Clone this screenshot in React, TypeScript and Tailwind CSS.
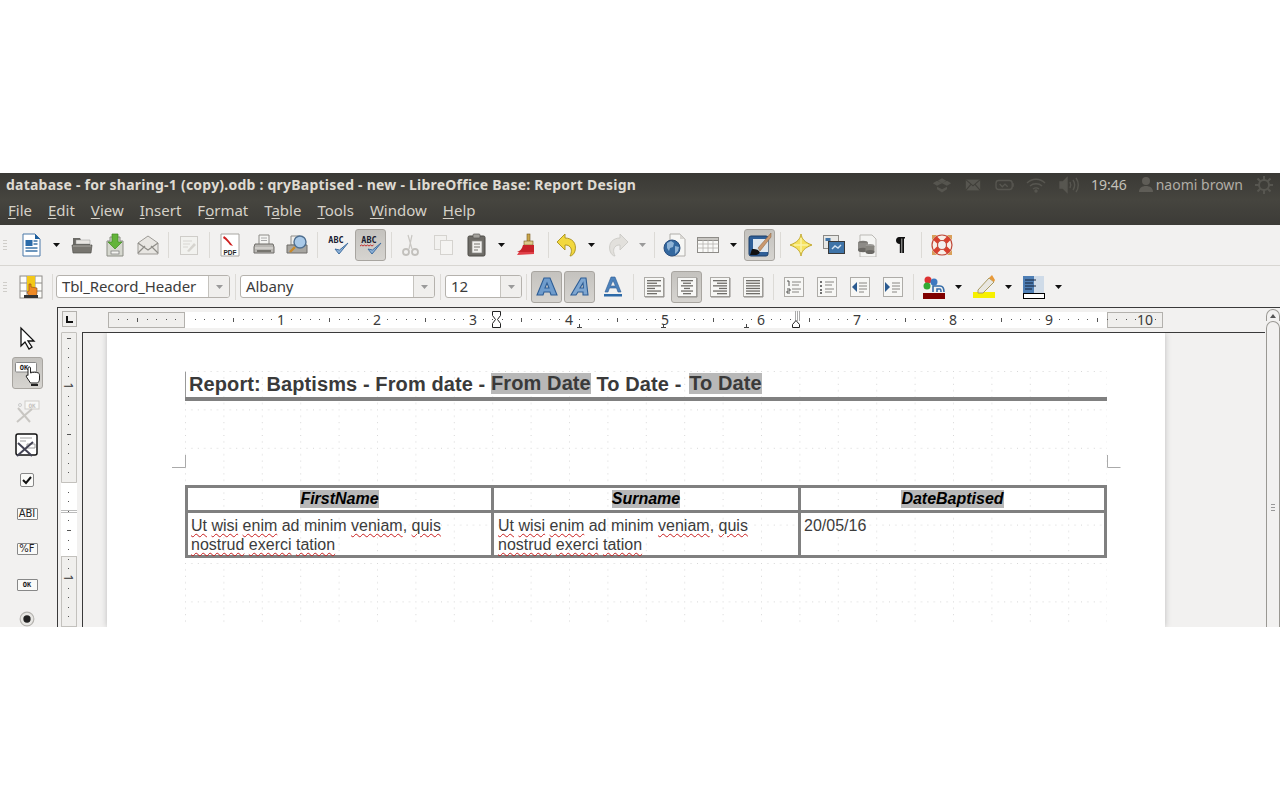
import React from "react";

const uiFont = "font-['Noto_Sans','Open_Sans',sans-serif]";
const docFont = "font-['Liberation_Sans',Arial,sans-serif]";

function Ic({ children, s = 24 }: { children: React.ReactNode; s?: number }) {
  return (
    <svg width={s} height={s} viewBox="0 0 24 24" fill="none">
      {children}
    </svg>
  );
}

function Slot({ w, active, children }: { w: string; active?: boolean; children?: React.ReactNode }) {
  return (
    <div className={`${w} h-full flex items-center justify-center shrink-0`}>
      {active ? (
        <div className="w-[31px] h-[32px] flex items-center justify-center rounded-[3px] border border-[#a8a5a0] bg-gradient-to-b from-[#c4c2be] to-[#d6d4d0]">
          {children}
        </div>
      ) : (
        children
      )}
    </div>
  );
}

function Drop({ dim }: { dim?: boolean }) {
  return (
    <svg width="7" height="4" viewBox="0 0 7 4">
      <path d="M0 0h7L3.500 4z" fill={dim ? "#9a9a9a" : "#111"} />
    </svg>
  );
}

function Sep() {
  return <div className="w-[8px] h-full flex items-center justify-center shrink-0"><div className="w-px h-[26px] bg-[#dcdad6]" /></div>;
}

function Grip() {
  return (
    <div className="w-[14px] h-full flex items-center justify-start pl-[3px] shrink-0">
      <div className="flex flex-col gap-[2px]">
        <div className="w-[4px] h-px bg-[#cfcdc9]" />
        <div className="w-[4px] h-px bg-[#cfcdc9]" />
        <div className="w-[4px] h-px bg-[#cfcdc9]" />
        <div className="w-[4px] h-px bg-[#cfcdc9]" />
      </div>
    </div>
  );
}

const NewDoc = () => (
  <Ic>
    <path d="M4 1h12l5 5v17H4z" fill="#fff" stroke="#4a78a8" />
    <path d="M16 1l5 5h-5z" fill="#1d5f9e" />
    <rect x="6.500" y="7" width="7" height="6" fill="#2a6aa8" />
    <path d="M14.500 8h4M14.500 11h4M6.500 15h12M6.500 18h12" stroke="#3d74a8" strokeWidth="1.300" />
  </Ic>
);
const Open = () => (
  <Ic>
    <path d="M3 5h7l1 2h9v6H3z" fill="#6b6a66" />
    <path d="M6 7h14v4H6z" fill="#e8e6e2" stroke="#999" strokeWidth=".5" />
    <path d="M2 12h20l-1 8H3z" fill="#77756f" stroke="#55534f" strokeWidth=".7" />
    <path d="M3 13h18" stroke="#aaa8a3" />
  </Ic>
);
const Save = () => (
  <Ic>
    <path d="M4 8h3v-4h10v4h3v15H4z" fill="#d6d8cf" stroke="#8b8d84" />
    <path d="M9 1h6v8h4l-7 7-7-7h4z" fill="#63b43a" stroke="#3f8a22" strokeWidth=".7" />
    <rect x="8" y="18" width="8" height="3" fill="#f4f4f0" stroke="#777" strokeWidth=".7" />
  </Ic>
);
const Mail = () => (
  <Ic>
    <path d="M2 10l10-7 10 7v11H2z" fill="#e8e6e2" stroke="#9d9b96" />
    <path d="M2 20l7-7M22 20l-7-7M2 10l10 7 10-7" stroke="#8f8d88" strokeWidth="1.200" />
  </Ic>
);
const Edit = () => (
  <Ic>
    <rect x="3.500" y="3.500" width="17" height="18" fill="#f2f2ef" stroke="#cfcdc9" />
    <path d="M6 8h9M6 11h7M6 14h5" stroke="#d8d6d2" />
    <path d="M10 18l7-8 2 2-7 7z" fill="#d6d4cf" />
  </Ic>
);
const Pdf = () => (
  <Ic>
    <path d="M3 1h18v22H3z" fill="#fff" stroke="#a8a6a2" />
    <path d="M6 3c3 2 6 6 9 10l-3-1c-2-3-4-5-7-7z" fill="#cf2020" />
    <text x="12" y="21.500" textAnchor="middle" fontSize="6.500" fontWeight="700" fontFamily="Liberation Sans" fill="#222">PDF</text>
  </Ic>
);
const Print = () => (
  <Ic>
    <path d="M7 2h10v10H7z" fill="#f5f5f3" stroke="#8e8c88" />
    <path d="M9 5h6M9 7.500h6" stroke="#aaa" />
    <path d="M3 11h18l1 3v6H2v-6z" fill="#b9b7b3" stroke="#6e6c68" />
    <path d="M3 15h18" stroke="#e5e3df" />
    <rect x="5" y="17" width="14" height="2" fill="#77756f" />
  </Ic>
);
const Preview = () => (
  <Ic>
    <path d="M6 3h9v9H6z" fill="#f0efec" stroke="#8e8c88" />
    <path d="M2 12h20v8H2z" fill="#a8a6a1" stroke="#6e6c68" />
    <circle cx="15" cy="9" r="6" fill="#a9c9e8" stroke="#4f6f90" strokeWidth="1.400" />
    <path d="M10 14l-5 5" stroke="#c98a2a" strokeWidth="2.400" />
  </Ic>
);
const Abc = ({ wavy }: { wavy?: boolean }) => (
  <Ic>
    <text x="10" y="10" textAnchor="middle" fontSize="8.500" fontWeight="700" fontFamily="DejaVu Sans Mono" fill="#1a2030">ABC</text>
    {wavy && <path d="M1 13l1.500-1 1.500 1 1.500-1 1.500 1 1.500-1 1.500 1 1.500-1 1.500 1 1.500-1" stroke="#c02020" strokeWidth=".9" />}
    <path d="M9 16l4 5 9-11-8.500 7z" fill="#8fb2d8" stroke="#3f6ea0" strokeWidth="1" />
  </Ic>
);
const Cut = () => (
  <Ic>
    <path d="M13 2l-3 14M9 2l4 14" stroke="#c9c7c3" strokeWidth="1.200" />
    <circle cx="7" cy="19" r="3" stroke="#c2c0bc" strokeWidth="1.800" />
    <circle cx="16" cy="19" r="3" stroke="#c2c0bc" strokeWidth="1.800" />
  </Ic>
);
const Copy = () => (
  <Ic>
    <rect x="2.500" y="2.500" width="12" height="14" fill="#f2f1ef" stroke="#d5d3cf" />
    <rect x="8.500" y="7.500" width="12" height="14" fill="#f5f4f2" stroke="#d5d3cf" />
  </Ic>
);
const Paste = () => (
  <Ic>
    <rect x="3" y="3" width="17" height="20" rx="1.500" fill="#6e6c67" stroke="#4c4a46" />
    <rect x="8" y="1" width="7" height="4" rx="1" fill="#a4a29d" stroke="#5a5854" strokeWidth=".7" />
    <rect x="7" y="8" width="10" height="12" fill="#f2f1ee" stroke="#8a8884" strokeWidth=".7" />
    <path d="M9 11h6M9 14h6M9 17h4" stroke="#77756f" />
  </Ic>
);
const Brush = () => (
  <Ic>
    <rect x="12" y="1" width="3" height="8" fill="#c9a64a" stroke="#7a5d22" strokeWidth=".6" />
    <rect x="9" y="8" width="9" height="4" fill="#dcc98a" stroke="#7a5d22" strokeWidth=".6" />
    <path d="M8 12h11v7H2c3-1 5-3 6-7z" fill="#c8222a" />
    <path d="M2 22l17-1v-2H4z" fill="#e04048" />
  </Ic>
);
const Undo = () => (
  <Ic>
    <path d="M2 9l8-8v4c7 0 12 5 10 13-1 3-3 5-5 5 2-4 2-8-1-10-1-1-3-1-4-1v5z" fill="#f2d83e" stroke="#a88f1c" strokeWidth=".9" />
  </Ic>
);
const Redo = () => (
  <svg width="24" height="24" viewBox="0 0 24 24" className="-scale-x-100">
    <path d="M2 9l8-8v4c7 0 12 5 10 13-1 3-3 5-5 5 2-4 2-8-1-10-1-1-3-1-4-1v5z" fill="#e2e0dc" stroke="#cbc9c5" strokeWidth=".9" />
  </svg>
);
const Globe = () => (
  <Ic>
    <path d="M7 1h10l5 5v17H7z" fill="#f7f7f5" stroke="#b0aeaa" />
    <path d="M17 1l5 5h-5z" fill="#d8d6d2" />
    <circle cx="9" cy="15" r="8" fill="#34689f" stroke="#2a4f80" />
    <path d="M4 10l4-2 3 2-1 4-3 1-1 3-2-3zM12 13l4 1-1 4-3 3z" fill="#8fb3d6" />
  </Ic>
);
const TableIc = () => (
  <Ic>
    <rect x="1.500" y="4.500" width="21" height="15" fill="#fafaf8" stroke="#8e8c88" />
    <rect x="1.500" y="4.500" width="21" height="3" fill="#c8c6c2" stroke="#8e8c88" />
    <path d="M1.500 11h21M1.500 15h21M7 7v12M12 7v12M17 7v12" stroke="#b5b3af" strokeWidth=".8" />
  </Ic>
);
const Design = () => (
  <Ic>
    <rect x="1" y="3" width="19" height="20" rx="2" fill="#2f5f98" stroke="#1c3f68" />
    <rect x="5" y="6" width="15" height="13" fill="#dfe7ef" />
    <path d="M23 0L10 15l2 3L23 4z" fill="#c99870" stroke="#8a6038" strokeWidth=".5" />
    <path d="M4 16c2 0 5 0 7 2s-1 4-4 4H2z" fill="#111" />
  </Ic>
);
const Star = () => (
  <Ic>
    <path d="M12 1c1 5 3 8 11 11-8 3-10 6-11 11-1-5-3-8-11-11 8-3 10-6 11-11z" fill="#f6e25e" stroke="#c4ab34" />
    <path d="M12 5v14M5 12h14" stroke="#fbf3a8" strokeWidth="1.500" />
  </Ic>
);
const Nav = () => (
  <Ic>
    <rect x="1.500" y="2.500" width="15" height="13" fill="#e8e8e6" stroke="#8c8a86" />
    <rect x="3.500" y="5" width="5" height="3" fill="#3f74a8" />
    <rect x="6.500" y="8.500" width="16" height="12" fill="#3f74a8" stroke="#3a3a3a" />
    <path d="M10 16l3-3 3 2 3-3" stroke="#d4e3f2" strokeWidth="1.400" />
  </Ic>
);
const Db = () => (
  <Ic>
    <path d="M5 2h12l4 4v18H5z" fill="#f4f4f2" stroke="#bbb9b5" />
    <ellipse cx="8" cy="10" rx="5" ry="2.200" fill="#7d7b77" />
    <rect x="3" y="10" width="10" height="7" fill="#8d8b87" />
    <ellipse cx="8" cy="17" rx="5" ry="2.200" fill="#6a6864" />
    <ellipse cx="15" cy="13" rx="4.500" ry="2" fill="#9a9894" />
    <rect x="10.500" y="13" width="9" height="6" fill="#87857f" />
    <ellipse cx="15" cy="19" rx="4.500" ry="2" fill="#6a6864" />
  </Ic>
);
const Pilcrow = () => (
  <svg width="9" height="16" viewBox="0 0 9 16">
    <path d="M3 0h6v1.500H8V16H6.200V1.500H5.500V16H3.800V7C1.500 7 0 5.500 0 3.500S1.500 0 3 0z" fill="#111" />
  </svg>
);
const Buoy = () => (
  <Ic>
    <path d="M2 2h5l-5 5zM22 2h-5l5 5zM2 22h5l-5-5zM22 22h-5l5-5z" fill="#d9a05a" />
    <circle cx="12" cy="12" r="10" fill="#f7efe8" stroke="#c04a3a" strokeWidth="1.200" />
    <path d="M5 5l4.500 4.500M19 5l-4.500 4.500M5 19l4.500-4.500M19 19l-4.500-4.500" stroke="#d8402e" strokeWidth="5" />
    <circle cx="12" cy="12" r="4.500" fill="#f2f1f0" stroke="#c04a3a" strokeWidth="1.200" />
  </Ic>
);

const FormatA = ({ kind }: { kind: "b" | "i" | "u" }) => (
  <Ic>
    {kind === "b" && (
      <path d="M9 3h6l7 17h-6l-1-3H9l-1 3H2zM12 8l-2 5h4z" fill="#6f9ccc" stroke="#2d5d95" strokeWidth="1.100" fillRule="evenodd" />
    )}
    {kind === "i" && (
      <path d="M13 3h5l2 17h-5v-3h-5l-2 3H3zM15 8l-3 5h3.500z" fill="#7ea6d0" stroke="#2d5d95" strokeWidth="1.100" fillRule="evenodd" />
    )}
    {kind === "u" && (
      <>
        <path d="M10 2h4l6 15h-3l-1.500-4h-7L7 17H4zM12 5.500L9.500 11h5z" fill="#4d82bb" stroke="#2d5d95" strokeWidth=".6" fillRule="evenodd" />
        <rect x="3" y="19" width="18" height="2.500" fill="#2d6aa8" />
      </>
    )}
  </Ic>
);

const Align = ({ k }: { k: "l" | "c" | "r" | "j" }) => {
  const rows: [number, number][] =
    k === "l" ? [[5, 14], [5, 10], [5, 14], [5, 8], [5, 14], [5, 10]]
    : k === "c" ? [[6, 12], [8, 8], [6, 12], [9, 6], [6, 12], [8, 8]]
    : k === "r" ? [[5, 14], [9, 10], [5, 14], [11, 8], [5, 14], [9, 10]]
    : [[5, 14], [5, 14], [5, 14], [5, 14], [5, 14], [5, 14]];
  return (
    <Ic>
      <rect x="2.500" y="2.500" width="19" height="19" fill="#f7f7f5" stroke="#aeaca8" />
      <path d="M3 22h19V3" stroke="#8f8d89" strokeWidth="1" />
      {rows.map(([x, w], i) => (
        <rect key={i} x={x} y={5 + i * 2.6} width={w} height="1.300" fill="#6f6d69" />
      ))}
    </Ic>
  );
};
const ListIc = ({ k }: { k: "n" | "b" | "o" | "i" }) => (
  <Ic>
    <rect x="2.500" y="2.500" width="19" height="19" fill="#f7f7f5" stroke="#aeaca8" />
    {k === "n" && <path d="M5 6h2v5M5 14h3v2H5v2h3" stroke="#444" strokeWidth=".9" />}
    {k === "b" && <path d="M5 7h2M5 11h2M5 15h2M5 18h2" stroke="#444" strokeWidth="1.300" />}
    {k === "o" && <path d="M9 7l-5 5 5 5z" fill="#2a5a90" />}
    {k === "i" && <path d="M4 7l5 5-5 5z" fill="#2a5a90" />}
    <path d={k === "o" || k === "i" ? "M11 8h8M11 11h8M11 14h8M11 17h5" : "M10 7h9M10 10h7M10 14h9M10 17h7"} stroke="#888682" />
  </Ic>
);
const FontColor = () => (
  <Ic>
    <circle cx="6" cy="5" r="3.500" fill="#d33" />
    <circle cx="5" cy="11" r="3.500" fill="#3a3" />
    <circle cx="12" cy="7" r="3.500" fill="#3c78c0" />
    <path d="M11 17v-6h7c3 0 4 2 4 6M15 17v-3h3c1 0 1 1 1 3" stroke="#356ca8" strokeWidth="1.600" />
    <rect x="1" y="18" width="22" height="6" fill="#800000" />
  </Ic>
);
const Highlight = () => (
  <Ic>
    <rect x="1" y="17" width="22" height="6" fill="#f7f000" />
    <path d="M6 15L17 3l5 4-11 11H6z" fill="#e9e7e0" stroke="#a89a62" />
    <path d="M17 3l3-3 3 5-1 2z" fill="#e89a3a" />
  </Ic>
);
const Bg = () => (
  <Ic>
    <rect x="1" y="1" width="21" height="17" fill="#4f7fb5" />
    <rect x="12" y="1" width="10" height="17" fill="#cfdbe8" />
    <path d="M3 5h11M3 8h8M3 11h11M3 14h7" stroke="#15233a" strokeWidth="1.200" />
    <rect x="1.500" y="18.500" width="21" height="5" fill="#fff" stroke="#000" />
  </Ic>
);
const TableCtl = () => (
  <Ic>
    <rect x="1" y="1" width="22" height="22" fill="#fdfdfa" stroke="#8e8c88" />
    <path d="M1 8h22M1 16h22M8 1v22M16 1v22" stroke="#8e8c88" />
    <rect x="8" y="1" width="8" height="7" fill="#f3c818" />
    <rect x="8" y="8" width="8" height="8" fill="#f3c818" />
    <path d="M10 9v7l-2 1c1 3 3 5 6 5s4-2 4-5v-4l-6-1V9z" fill="#ef8a25" stroke="#8a4a10" strokeWidth=".6" />
    <rect x="5" y="20" width="14" height="3" fill="#333" />
  </Ic>
);

function Combo({ w, text }: { w: string; text: string }) {
  return (
    <div className={`${w} h-[23px] flex shrink-0 rounded-[3px] border border-[#b5b2ad] bg-white overflow-hidden`}>
      <div className="flex-1 pl-[5px] flex items-center text-[15px] leading-none text-[#3c3c3c] whitespace-nowrap tracking-[-0.1px]">
        {text}
      </div>
      <div className="w-[21px] border-l border-[#c5c3be] bg-[#f0efed] flex items-center justify-center">
        <Drop dim />
      </div>
    </div>
  );
}

function TitleBar() {
  return (
    <div className="h-[27px] flex items-center bg-gradient-to-b from-[#3a3935] to-[#46453f] pl-[6px] pr-[6px] pb-[4px]">
      <div className="flex-1 text-[14px] font-bold text-[#dfdbd2] whitespace-nowrap tracking-[0.23px]">
        database - for sharing-1 (copy).odb : qryBaptised - new - LibreOffice Base: Report Design
      </div>
      <div className="flex items-center">
        <svg width="20" height="18" viewBox="0 0 24 20" fill="#56554f" className="mr-[2px]"><path d="M12 2l5 3-5 3-5-3zM6 5L1 8l5 3 6-3zM18 5l5 3-5 3-6-3zM6 12l6 3 6-3v3l-6 4-6-4z" /></svg>
        <svg width="18" height="18" viewBox="0 0 20 20" className="ml-[10px]"><path d="M2 4h16v12H2z" fill="#575650" /><path d="M2 4l8 7 8-7M2 16l6-7M18 16l-6-7" stroke="#403f3a" strokeWidth="1.200" fill="none" /></svg>
        <svg width="20" height="18" viewBox="0 0 22 20" className="ml-[13px]" fill="none" stroke="#575650" strokeWidth="1.500"><rect x="1" y="5" width="18" height="10" rx="3" /><path d="M5 9l3 3 3-3 3 3" /><path d="M20 8v4" /></svg>
        <svg width="22" height="20" viewBox="0 0 20 20" className="ml-[10px]" fill="none" stroke="#575650" strokeWidth="1.400"><path d="M1 8c5-5 13-5 18 0M4 11c3-3 9-3 12 0M7 14c2-1.500 4-1.500 6 0" /><circle cx="10" cy="16" r="1" fill="#575650" /></svg>
        <svg width="20" height="20" viewBox="0 0 20 20" className="ml-[12px]" fill="none" stroke="#575650" strokeWidth="1.400"><path d="M1 7h3l4-4v14l-4-4H1z" fill="#575650" /><path d="M11 7c1 2 1 4 0 6M14 5c2 3 2 7 0 10M17 3c3 4 3 10 0 14" /></svg>
        <div className="ml-[12px] text-[14px] text-[#c4c1b9] whitespace-nowrap">19:46</div>
        <svg width="16" height="18" viewBox="0 0 16 18" className="ml-[11px]" fill="#5f5d57"><circle cx="8" cy="5" r="4" /><path d="M1 16c0-4 3-6 7-6s7 2 7 6z" /></svg>
        <div className="ml-[2px] text-[14px] text-[#b0ada5] whitespace-nowrap">naomi brown</div>
        <svg width="20" height="20" viewBox="0 0 20 20" className="ml-[11px]" fill="none" stroke="#575650" strokeWidth="2"><circle cx="10" cy="10" r="5" /><path d="M10 1v4M10 15v4M1 10h4M15 10h4M3.500 3.500l3 3M13.500 13.500l3 3M3.500 16.500l3-3M13.500 6.500l3-3" /></svg>
      </div>
    </div>
  );
}

function MenuBar() {
  const items: [string, string, string][] = [
    ["", "F", "ile"], ["", "E", "dit"], ["", "V", "iew"], ["", "I", "nsert"], ["F", "o", "rmat"],
    ["T", "a", "ble"], ["", "T", "ools"], ["", "W", "indow"], ["", "H", "elp"],
  ];
  return (
    <div className="h-[25px] flex items-center gap-[16px] pl-[8px] pb-[4px] bg-gradient-to-b from-[#46453f] to-[#3c3b37] text-[15px] text-[#d5d1c8] whitespace-nowrap">
      {items.map(([a, b, c]) => (
        <div key={a + b + c}>
          {a}
          <span className="underline underline-offset-2 decoration-1">{b}</span>
          {c}
        </div>
      ))}
    </div>
  );
}

function ToolbarOne() {
  return (
    <div className="h-[41px] flex items-center border-b border-[#d8d6d2] bg-[#f2f1f0]">
      <Grip />
      <Slot w="w-[33px]"><NewDoc /></Slot>
      <Slot w="w-[18px]"><Drop /></Slot>
      <Slot w="w-[33px]"><Open /></Slot>
      <Slot w="w-[33px]"><Save /></Slot>
      <Slot w="w-[33px]"><Mail /></Slot>
      <Sep />
      <Slot w="w-[33px]"><Edit /></Slot>
      <Sep />
      <Slot w="w-[34px]"><Pdf /></Slot>
      <Slot w="w-[33px]"><Print /></Slot>
      <Slot w="w-[33px]"><Preview /></Slot>
      <Sep />
      <Slot w="w-[33px]"><Abc /></Slot>
      <Slot w="w-[33px]" active><Abc wavy /></Slot>
      <Sep />
      <Slot w="w-[32px]"><Cut /></Slot>
      <Slot w="w-[33px]"><Copy /></Slot>
      <Slot w="w-[33px]"><Paste /></Slot>
      <Slot w="w-[17px]"><Drop /></Slot>
      <Slot w="w-[34px]"><Brush /></Slot>
      <Sep />
      <Slot w="w-[30px]"><Undo /></Slot>
      <Slot w="w-[19px]"><Drop /></Slot>
      <Slot w="w-[33px]"><Redo /></Slot>
      <Slot w="w-[16px]"><Drop dim /></Slot>
      <Sep />
      <Slot w="w-[33px]"><Globe /></Slot>
      <Slot w="w-[33px]"><TableIc /></Slot>
      <Slot w="w-[19px]"><Drop /></Slot>
      <Slot w="w-[33px]" active><Design /></Slot>
      <Sep />
      <Slot w="w-[33px]"><Star /></Slot>
      <Slot w="w-[33px]"><Nav /></Slot>
      <Slot w="w-[33px]"><Db /></Slot>
      <Slot w="w-[34px]"><Pilcrow /></Slot>
      <Sep />
      <Slot w="w-[33px]"><Buoy /></Slot>
    </div>
  );
}

function ToolbarTwo() {
  return (
    <div className="h-[41px] flex items-center bg-[#f2f1f0]">
      <Grip />
      <Slot w="w-[34px]"><TableCtl /></Slot>
      <Sep />
      <Combo w="w-[174px]" text="Tbl_Record_Header" />
      <div className="w-[10px] h-full flex items-center justify-center shrink-0"><div className="w-px h-[26px] bg-[#dcdad6]" /></div>
      <Combo w="w-[195px]" text="Albany" />
      <div className="w-[10px] h-full flex items-center justify-center shrink-0"><div className="w-px h-[26px] bg-[#dcdad6]" /></div>
      <Combo w="w-[77px]" text="12" />
      <Sep />
      <Slot w="w-[33px]" active><FormatA kind="b" /></Slot>
      <Slot w="w-[33px]" active><FormatA kind="i" /></Slot>
      <Slot w="w-[33px]"><FormatA kind="u" /></Slot>
      <Sep />
      <Slot w="w-[33px]"><Align k="l" /></Slot>
      <Slot w="w-[33px]" active><Align k="c" /></Slot>
      <Slot w="w-[33px]"><Align k="r" /></Slot>
      <Slot w="w-[33px]"><Align k="j" /></Slot>
      <Sep />
      <Slot w="w-[33px]"><ListIc k="n" /></Slot>
      <Slot w="w-[33px]"><ListIc k="b" /></Slot>
      <Slot w="w-[33px]"><ListIc k="o" /></Slot>
      <Slot w="w-[33px]"><ListIc k="i" /></Slot>
      <Sep />
      <Slot w="w-[33px]"><FontColor /></Slot>
      <Slot w="w-[17px]"><Drop /></Slot>
      <Slot w="w-[33px]"><Highlight /></Slot>
      <Slot w="w-[17px]"><Drop /></Slot>
      <Slot w="w-[33px]"><Bg /></Slot>
      <Slot w="w-[17px]"><Drop /></Slot>
    </div>
  );
}

function LeftTools() {
  const box = "w-[21px] h-[12px] border border-[#888] rounded-[1px] bg-[#fafaf8] flex items-center justify-center leading-none text-[#222]";
  return (
    <div className="w-[57px] shrink-0 bg-[#f2f1f0] flex flex-col items-center pr-[3px] pt-[19px] gap-[11px]">
      <svg width="24" height="24" viewBox="0 0 24 24"><path d="M6 2v18l4-4 4 7 3-2-4-6h6z" fill="#fff" stroke="#111" strokeWidth="1.300" /></svg>
      <div className="w-[31px] h-[32px] -mt-[4px] flex items-center justify-center rounded-[3px] border border-[#a8a5a0] bg-gradient-to-b from-[#c4c2be] to-[#d6d4d0]">
        <svg width="28" height="28" viewBox="0 0 28 28">
          <rect x="2.500" y="3.500" width="21" height="9.500" rx="1" fill="#fff" stroke="#888" />
          <text x="11" y="11" textAnchor="middle" fontSize="7" fontWeight="700" fontFamily="DejaVu Sans Mono" fill="#222">OK</text>
          <path d="M15 9c0-1.500 2.500-1.500 2.500 0v5c2-1 6-1 8 0 1 .5 1 2 1 3v3c0 2-1 3-2 4h-7l-4-6c-1-1.500 .5-2.500 1.500-1.500z" fill="#fff" stroke="#222" />
          <path d="M18 25h7v2h-7z" fill="#222" />
        </svg>
      </div>
      <svg width="26" height="24" viewBox="0 0 26 24" className="mt-0">
        <circle cx="6" cy="5" r="1.500" stroke="#ccc" fill="none" />
        <rect x="11" y="1" width="14" height="8" fill="#f8f8f6" stroke="#d0cec9" />
        <text x="18" y="7.500" textAnchor="middle" fontSize="6" fontWeight="700" fontFamily="DejaVu Sans Mono" fill="#c4c2be">OK</text>
        <path d="M3 22L18 9M4 8l12 14" stroke="#c8c6c2" strokeWidth="2" />
      </svg>
      <svg width="24" height="24" viewBox="0 0 24 24" className="mt-[-2px]">
        <rect x="1" y="1" width="21" height="21" rx="2" fill="#fff" stroke="#111" strokeWidth="1.500" />
        <path d="M5 5h12M5 8h6M12 11h8v4h-8z" stroke="#888" strokeWidth=".8" fill="none" />
        <path d="M2 23l16-14M3 10l14 13" stroke="#445" strokeWidth="2" />
      </svg>
      <svg width="14" height="14" viewBox="0 0 14 14" className="mt-[5px]"><rect x=".5" y=".5" width="13" height="13" rx="1.500" fill="#fafaf8" stroke="#888" /><path d="M3 7l3 3 5-6" stroke="#111" strokeWidth="2" fill="none" /></svg>
      <div className={`${box} mt-[10px] text-[10px] font-['DejaVu_Sans',sans-serif]`}>ABI</div>
      <div className={`${box} mt-[12px] text-[10px] font-['DejaVu_Sans',sans-serif]`}>%F</div>
      <div className={`${box} mt-[13px] text-[7px] font-bold font-['DejaVu_Sans_Mono',monospace]`}>OK</div>
      <svg width="16" height="16" viewBox="0 0 14 14" className="mt-[9px]"><circle cx="7" cy="7" r="6" fill="#e8e7e4" stroke="#b5b3af" /><circle cx="7" cy="7" r="3.200" fill="#222" /></svg>
    </div>
  );
}

function HRuler() {
  const nums = ["1", "2", "3", "4", "5", "6", "7", "8", "9", "10"];
  const marks: { x: number; tick: boolean }[] = [];
  for (let i = -17; i <= 91; i++) {
    if (i % 10 === 0) continue;
    marks.push({ x: Math.round(204 + 9.6 * i), tick: i % 5 === 0 });
  }
  return (
    <div className="relative flex-1 h-[19px] flex">
      <div className="w-[31px]" />
      <div className="w-[77px] border border-[#b3b1ad] bg-[#f0efed] h-[16px] mt-[1px]" />
      <div className="w-[922px] bg-white h-[16px] mt-[1px]" />
      <div className="w-[56px] border border-[#b3b1ad] bg-[#f0efed] h-[16px] mt-[1px]" />
      <svg className="absolute left-0 top-0" width="1188" height="20">
        {marks.map((m) => (
          <rect key={m.x} x={m.x} y={m.tick ? 7 : 8} width="1" height={m.tick ? 4 : 1} fill="#555" />
        ))}
        <path d="M415.500 .5h8v4l-3 4 3 4v4h-8v-4l3-4-3-4z" fill="#fff" stroke="#222" />
        <path d="M718.500 0v10M720.500 0v10M722.500 0v10" stroke="#aaa" />
        <path d="M715.500 16.500v-3l3.500-4 3.500 4v3z" fill="#fff" stroke="#222" />
        <path d="M502.500 13v3.500M500 16.500h5M586.500 13v3.500M584 16.500h5M669.500 13v3.500M667 16.500h5" stroke="#444" />
      </svg>
      <div className="absolute left-[156px] top-0 h-[17px] flex text-[14px] leading-[17px] text-[#3a3a3a]">
        {nums.map((n) => (
          <div key={n} className="w-[96px] text-center">{n}</div>
        ))}
      </div>
    </div>
  );
}

function VRuler() {
  const marks: { y: number; tick: boolean }[] = [];
  for (let i = -5; i <= 25; i++) {
    if (i % 10 === 0) continue;
    marks.push({ y: Math.round(54 + 9.6 * i), tick: i % 5 === 0 });
  }
  return (
    <div className="relative w-[16px] h-full shrink-0 flex flex-col">
      <div className="h-[151px] border border-[#c3c1bd] bg-[#f0efed] rounded-t-[1px]" />
      <div className="h-[27px] bg-white" />
      <div className="h-[3px] border-y border-[#bbb] bg-white" />
      <div className="h-[43px] bg-white" />
      <div className="flex-1 border border-[#c3c1bd] bg-[#f0efed]" />
      <svg className="absolute left-0 top-0" width="16" height="294">
        {marks.map((m) => (
          <rect key={m.y} x={m.tick ? 6 : 7} y={m.y} width={m.tick ? 4 : 1} height="1" fill="#555" />
        ))}
      </svg>
      <div className="absolute left-[4px] top-[47px] h-[14px] leading-[14px] w-[8px] text-center text-[13px] text-[#333] rotate-90">1</div>
      <div className="absolute left-[4px] top-[239px] h-[14px] leading-[14px] w-[8px] text-center text-[13px] text-[#333] rotate-90">1</div>
    </div>
  );
}

function Wavy({ children }: { children: React.ReactNode }) {
  return <span className="underline decoration-wavy decoration-[#c81e1e] decoration-1 underline-offset-[2px]">{children}</span>;
}

function DataCell({ cls }: { cls: string }) {
  return (
    <div className={`${cls} h-[42px] shrink-0 pt-[4px] text-[16px] leading-[18.500px] text-[#3c3c3c] border-r-[3px] border-[#808080]`}>
      <Wavy>Ut</Wavy> <Wavy>wisi</Wavy> <Wavy>enim</Wavy> ad minim <Wavy>veniam</Wavy>, <Wavy>quis</Wavy>
      <br />
      <Wavy>nostrud</Wavy> <Wavy>exerci</Wavy> <Wavy>tation</Wavy>
    </div>
  );
}

function HeaderCell({ text, cls }: { text: string; cls: string }) {
  return (
    <div className={`${cls} h-[22px] flex items-center justify-center text-[16px] font-bold italic text-black`}>
      <span className="bg-[#b8b8b8] leading-[18px]">{text}</span>
    </div>
  );
}

function Page() {
  return (
    <div className={`relative ml-[24px] w-[1058px] h-full bg-white shadow-[0_0_6px_#bbb] pl-[78px] pt-[39px] ${docFont}`}>
      <svg className="absolute left-[78px] top-[38px]" width="922" height="264">
        <defs>
          <pattern id="grid" width="38.400" height="38.400" patternUnits="userSpaceOnUse">
            {[0, 1, 2, 3, 4, 5].map((i) => (
              <g key={i}>
                <rect x={i * 6.4} y="0" width="1" height="1" fill="#d6d6d6" />
                <rect x="0" y={i * 6.4} width="1" height="1" fill="#d6d6d6" />
              </g>
            ))}
          </pattern>
        </defs>
        <rect width="922" height="264" fill="url(#grid)" />
      </svg>
      <div className="relative w-[922px]">
        <div className="h-[25px] border-l border-[#999] pl-[3px] pb-[2px] flex items-center text-[20px] font-bold text-[#3a3a3a] whitespace-nowrap leading-none tracking-[0.1px]">
          Report: Baptisms - From date -&nbsp;<span className="bg-[#b8b8b8] leading-[21px]">From Date</span>&nbsp;To Date -&nbsp;<span className="ml-[2px] bg-[#b8b8b8] leading-[21px]">To Date</span>
        </div>
        <div className="h-[4px] bg-[#808080]" />
        <div className="h-[84px]" />
        <div className="border-[3px] border-[#808080]">
          <div className="flex border-b-[3px] border-[#808080]">
            <HeaderCell text="FirstName" cls="w-[306px] border-r-[3px] border-[#808080]" />
            <HeaderCell text="Surname" cls="w-[307px] border-r-[3px] border-[#808080]" />
            <HeaderCell text="DateBaptised" cls="flex-1" />
          </div>
          <div className="flex">
            <DataCell cls="w-[306px] pl-[3px]" />
            <DataCell cls="w-[307px] pl-[4px]" />
            <div className="flex-1 h-[42px] pl-[3px] pt-[4px] text-[16px] leading-[18.500px] text-[#3c3c3c]">20/05/16</div>
          </div>
        </div>
      </div>
      <svg className="absolute left-[65px] top-[121px]" width="949" height="14" fill="none" stroke="#aaa">
        <path d="M0 13.500h13.500V1" />
        <path d="M935.500 1v12.500h13" />
      </svg>
    </div>
  );
}

function Scrollbar() {
  return (
    <div className="w-[15px] shrink-0 bg-[#f2f1f0] border-t border-[#3a3a3a] flex flex-col items-center">
      <div className="w-[14px] h-[12px] mt-[1px] rounded-t-[7px] border border-b-0 border-[#9a9893] flex items-center justify-center bg-[#f2f1f0]">
        <svg width="6" height="4" viewBox="0 0 6 4"><path d="M3 0l3 4H0z" fill="#555" /></svg>
      </div>
      <div className="w-[14px] flex-1 rounded-t-[7px] border border-b-0 border-[#9a9893] bg-[#f2f1f0] flex flex-col items-center pt-[182px] gap-[2px]">
        <div className="w-[4px] h-px bg-[#999]" />
        <div className="w-[4px] h-px bg-[#999]" />
        <div className="w-[4px] h-px bg-[#999]" />
      </div>
    </div>
  );
}

export default function App() {
  return (
    <div className="h-screen w-full bg-white overflow-hidden">
      <div className="h-[173px]" />
      <div className={`h-[454px] flex flex-col overflow-hidden bg-[#f2f1f0] ${uiFont}`}>
        <TitleBar />
        <MenuBar />
        <ToolbarOne />
        <ToolbarTwo />
        <div className="flex-1 min-h-0 flex">
          <LeftTools />
          <div className="flex-1 min-w-0 flex flex-col border-l border-t border-[#3a3a3a] overflow-hidden">
            <div className="h-[24px] shrink-0 flex pt-[3px]">
              <div className="ml-[4px] w-[15px] h-[16px] border border-[#b3b1ad] bg-[#f0efed] flex items-center justify-center shrink-0">
                <svg width="8" height="7" viewBox="0 0 8 7"><path d="M1 0v6h6" stroke="#111" strokeWidth="2" fill="none" /></svg>
              </div>
              <HRuler />
            </div>
            <div className="flex-1 min-h-0 flex">
              <div className="ml-[3px] w-[21px] shrink-0 h-full"><VRuler /></div>
              <div className="flex-1 min-w-0 border-l border-t border-[#3a3a3a] bg-[#f2f1f0] overflow-hidden">
                <Page />
              </div>
            </div>
          </div>
          <Scrollbar />
        </div>
      </div>
    </div>
  );
}
